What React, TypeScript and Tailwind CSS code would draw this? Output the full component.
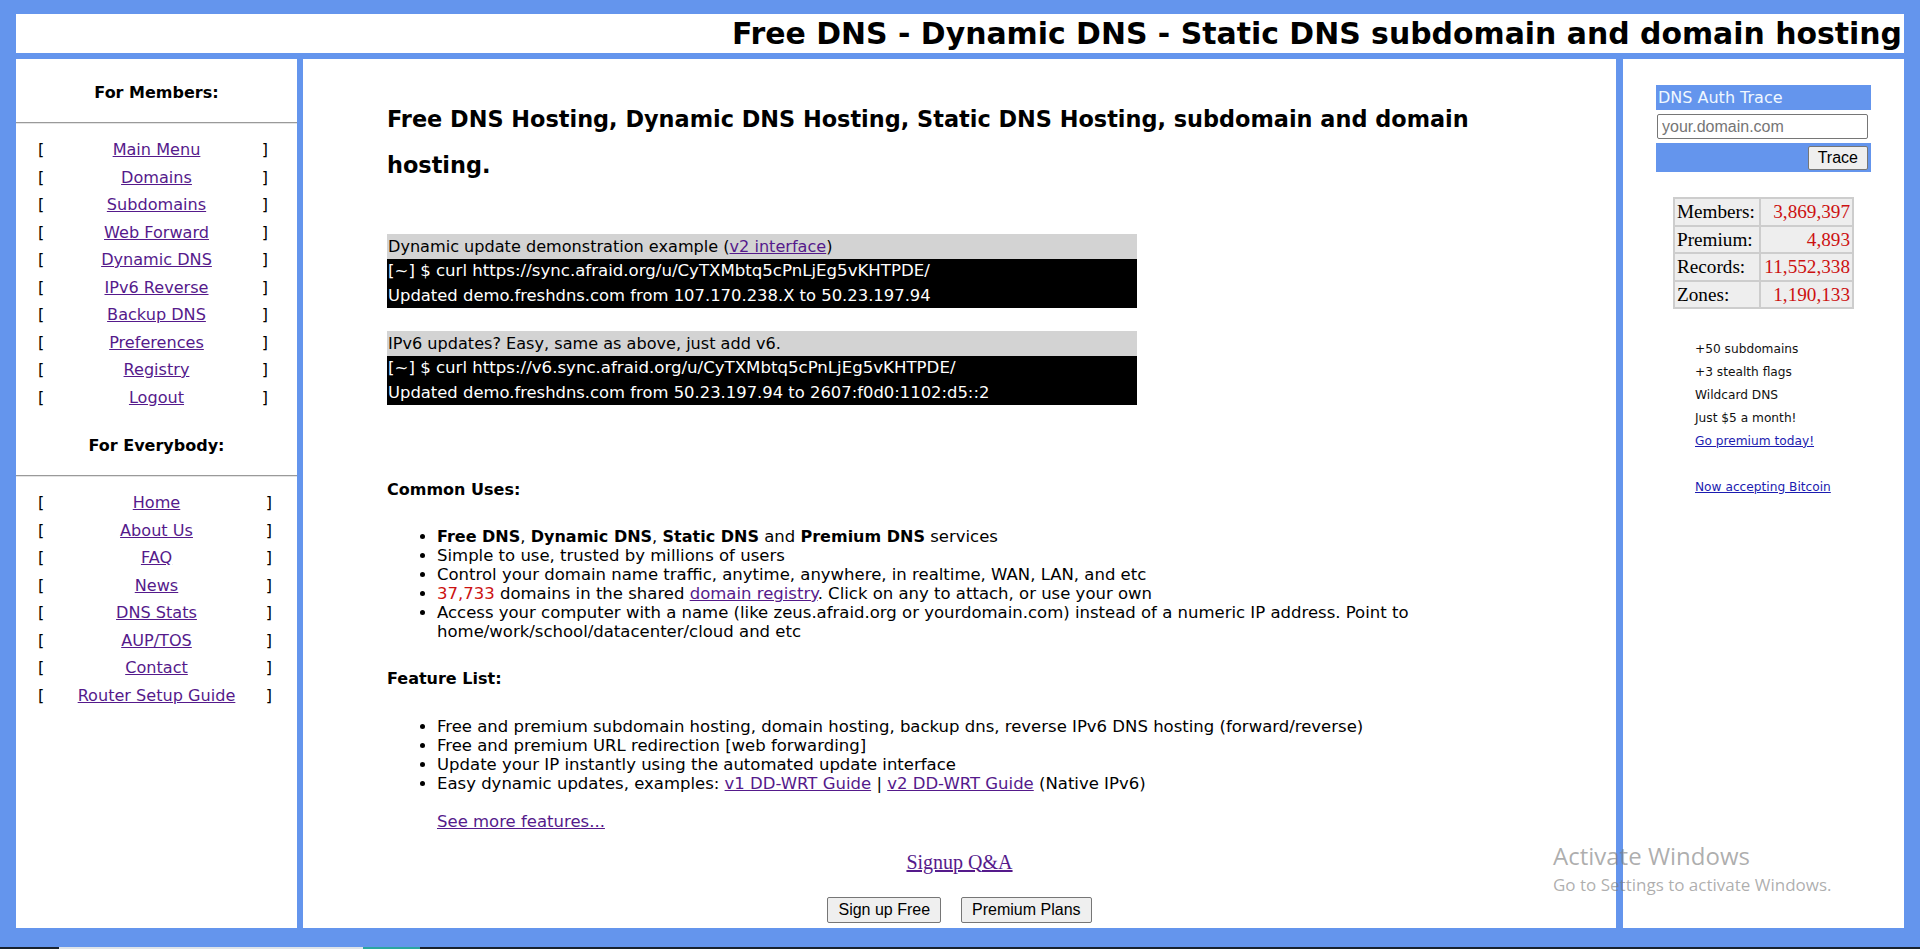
import React from 'react'

const memberLinks = ['Main Menu', 'Domains', 'Subdomains', 'Web Forward', 'Dynamic DNS', 'IPv6 Reverse', 'Backup DNS', 'Preferences', 'Registry', 'Logout']
const everybodyLinks = ['Home', 'About Us', 'FAQ', 'News', 'DNS Stats', 'AUP/TOS', 'Contact', 'Router Setup Guide']

const stats = [
  { label: 'Members:', value: '3,869,397' },
  { label: 'Premium:', value: '4,893' },
  { label: 'Records:', value: '11,552,338' },
  { label: 'Zones:', value: '1,190,133' },
]

const NavRows = ({ links, wide }: { links: string[]; wide?: boolean }) => (
  <div className={`ml-[22px] grid ${wide ? 'grid-cols-[20px_197px_28px]' : 'grid-cols-[20px_197px_20px]'}`}>
    {links.map((l) => (
      <React.Fragment key={l}>
        <span className='h-[27.5px] leading-[27.5px] text-left'>[</span>
        <a href='#' className='h-[27.5px] leading-[27.5px] text-center underline text-[#551a8b]'>{l}</a>
        <span className='h-[27.5px] leading-[27.5px] text-center'>]</span>
      </React.Fragment>
    ))}
  </div>
)

const SideHr = () => (
  <div className='border-t border-t-[#9a9a9a] border-b border-b-[#e4e4e4]' />
)

const App = () => {
  return (
    <div className="relative w-[1920px] h-[949px] overflow-hidden bg-[#6495ed] font-['DejaVu_Sans',Verdana,sans-serif] text-[16px] text-black">
      {/* header */}
      <div className='pt-[14px] px-[16px]'>
        <div className='h-[39px] bg-white flex items-center justify-end pr-[2px]'>
          <h1 className='text-[29.9px] font-bold leading-[35px]'>Free DNS - Dynamic DNS - Static DNS subdomain and domain hosting</h1>
        </div>
      </div>

      <div className='flex px-[16px] mt-[6px] h-[869px]'>
        {/* left menu */}
        <div className='w-[281px] bg-white shrink-0 text-[16.1px]'>
          <p className='mt-[24px] leading-[19px] font-bold text-center text-[16px]'>For Members:</p>
          <div className='mt-[20px]'><SideHr /></div>
          <div className='mt-[12px]'>
            <NavRows links={memberLinks} />
          </div>
          <p className='mt-[24.5px] leading-[19px] font-bold text-center text-[16px]'>For Everybody:</p>
          <div className='mt-[20px]'><SideHr /></div>
          <div className='mt-[12.5px]'>
            <NavRows links={everybodyLinks} wide />
          </div>
        </div>

        {/* main */}
        <div className='ml-[6px] w-[1313px] bg-white shrink-0 px-[84px] text-[16.5px]'>
          <h2 className='mt-[37px] text-[22.4px] leading-[46px] font-bold'>
            Free DNS Hosting, Dynamic DNS Hosting, Static DNS Hosting, subdomain and domain hosting.
          </h2>

          <div className='mt-[46px] w-[750px] text-[16.4px]'>
            <div className='h-[25px] leading-[25px] bg-[#d3d3d3] pl-[1px] text-[16.1px]'>
              Dynamic update demonstration example (<a href='#' className='underline text-[#551a8b]'>v2 interface</a>)
            </div>
            <div className='bg-black text-white pl-[1px]'>
              <div className='h-[24.5px] leading-[24.5px] text-[16.6px]'>[~] $ curl https://sync.afraid.org/u/CyTXMbtq5cPnLjEg5vKHTPDE/</div>
              <div className='h-[24.5px] leading-[24.5px]'>Updated demo.freshdns.com from 107.170.238.X to 50.23.197.94</div>
            </div>
          </div>

          <div className='mt-[23px] w-[750px] text-[16.4px]'>
            <div className='h-[25px] leading-[25px] bg-[#d3d3d3] pl-[1px] text-[16.1px]'>IPv6 updates? Easy, same as above, just add v6.</div>
            <div className='bg-black text-white pl-[1px]'>
              <div className='h-[24.5px] leading-[24.5px] text-[16.6px]'>[~] $ curl https://v6.sync.afraid.org/u/CyTXMbtq5cPnLjEg5vKHTPDE/</div>
              <div className='h-[24.5px] leading-[24.5px]'>Updated demo.freshdns.com from 50.23.197.94 to 2607:f0d0:1102:d5::2</div>
            </div>
          </div>

          <p className='mt-[75px] leading-[19px] font-bold text-[16px]'>Common Uses:</p>
          <ul className='mt-[28px] pl-[50px] list-disc leading-[19px]'>
            <li><b className='text-[16px]'>Free DNS</b>, <b className='text-[16px]'>Dynamic DNS</b>, <b className='text-[16px]'>Static DNS</b> and <b className='text-[16px]'>Premium DNS</b> services</li>
            <li>Simple to use, trusted by millions of users</li>
            <li>Control your domain name traffic, anytime, anywhere, in realtime, WAN, LAN, and etc</li>
            <li><span className='text-[#cc1111]'>37,733</span> domains in the shared <a href='#' className='underline text-[#551a8b]'>domain registry</a>. Click on any to attach, or use your own</li>
            <li>Access your computer with a name (like zeus.afraid.org or yourdomain.com) instead of a numeric IP address. Point to home/work/school/datacenter/cloud and etc</li>
          </ul>

          <p className='mt-[28px] leading-[19px] font-bold text-[16px]'>Feature List:</p>
          <ul className='mt-[29px] pl-[50px] list-disc leading-[19px]'>
            <li>Free and premium subdomain hosting, domain hosting, backup dns, reverse IPv6 DNS hosting (forward/reverse)</li>
            <li>Free and premium URL redirection [web forwarding]</li>
            <li>Update your IP instantly using the automated update interface</li>
            <li>Easy dynamic updates, examples: <a href='#' className='underline text-[#551a8b]'>v1 DD-WRT Guide</a> | <a href='#' className='underline text-[#551a8b]'>v2 DD-WRT Guide</a> (Native IPv6)</li>
          </ul>
          <p className='mt-[19px] pl-[50px] leading-[19px]'>
            <a href='#' className='underline text-[#551a8b]'>See more features...</a>
          </p>

          <p className="mt-[19.5px] text-center leading-[23px] text-[20px] font-['Liberation_Serif',serif]">
            <a href='#' className='underline text-[#551a8b]'>Signup Q&amp;A</a>
          </p>
          <div className="mt-[23.5px] flex justify-center gap-[20px] font-['Liberation_Sans',Arial,sans-serif]">
            <button className='h-[26px] px-[10px] bg-[#efefef] border border-[#767676] rounded-[2px] text-[16px]'>Sign up Free</button>
            <button className='h-[26px] px-[10px] bg-[#efefef] border border-[#767676] rounded-[2px] text-[16px]'>Premium Plans</button>
          </div>
        </div>

        {/* right column */}
        <div className='ml-[7px] w-[281px] bg-white shrink-0'>
          <div className='mt-[26px] mx-auto w-[215px]'>
            <div className='h-[25px] leading-[25px] bg-[#6495ed] text-[#f0f8ff] text-[16px] pl-[2px]'>DNS Auth Trace</div>
            <div className='h-[33px] pt-[4px] pl-[1px]'>
              <input
                placeholder='your.domain.com'
                className="w-[211px] h-[25px] border border-[#767676] rounded-[2px] px-[4px] text-[16px] font-['Liberation_Sans',Arial,sans-serif] placeholder:text-[#757575] outline-none"
              />
            </div>
            <div className='h-[29px] bg-[#6495ed] flex justify-end items-start pt-[3px] pr-[3px]'>
              <button className="h-[24px] px-[9px] bg-[#efefef] border border-[#767676] rounded-[2px] text-[16px] leading-[20px] font-['Liberation_Sans',Arial,sans-serif]">Trace</button>
            </div>
          </div>

          <div className="mt-[25px] mx-auto w-[181px] grid grid-cols-[84px_91px] gap-[2px] p-[2px] bg-[#cdcdcd] font-['Liberation_Serif',serif] text-[19.2px]">
            {stats.map((s) => (
              <React.Fragment key={s.label}>
                <div className='h-[25.5px] leading-[25.5px] bg-[#eeeeee] pl-[2px]'>{s.label}</div>
                <div className='h-[25.5px] leading-[25.5px] bg-[#eeeeee] pr-[2px] text-right text-[#cc1111]'>{s.value}</div>
              </React.Fragment>
            ))}
          </div>

          <div className='mt-[28.5px] pl-[72px] text-[12.2px] leading-[23px] text-[#111]'>
            <p>+50 subdomains</p>
            <p>+3 stealth flags</p>
            <p>Wildcard DNS</p>
            <p>Just $5 a month!</p>
            <p><a href='#' className='underline text-[#1c1cb0]'>Go premium today!</a></p>
            <p className='mt-[23px]'><a href='#' className='underline text-[#1c1cb0]'>Now accepting Bitcoin</a></p>
          </div>
        </div>
      </div>

      {/* taskbar peek */}
      <div className='absolute left-0 bottom-0 w-full h-[2px] bg-[#18222e] flex'>
        <div className='ml-[59px] w-[304px] bg-[#dde3e8]' />
        <div className='w-[57px] bg-[#2aa6a0]' />
      </div>

      {/* windows watermark */}
      <div className="absolute left-[1553px] top-[840px] pointer-events-none font-['Open_Sans','Noto_Sans',sans-serif] text-[rgba(120,120,120,0.6)]">
        <div className='text-[24px] leading-[32px]'>Activate Windows</div>
        <div className='text-[17px] leading-[22px] mt-[2px]'>Go to Settings to activate Windows.</div>
      </div>
    </div>
  )
}

export default App
